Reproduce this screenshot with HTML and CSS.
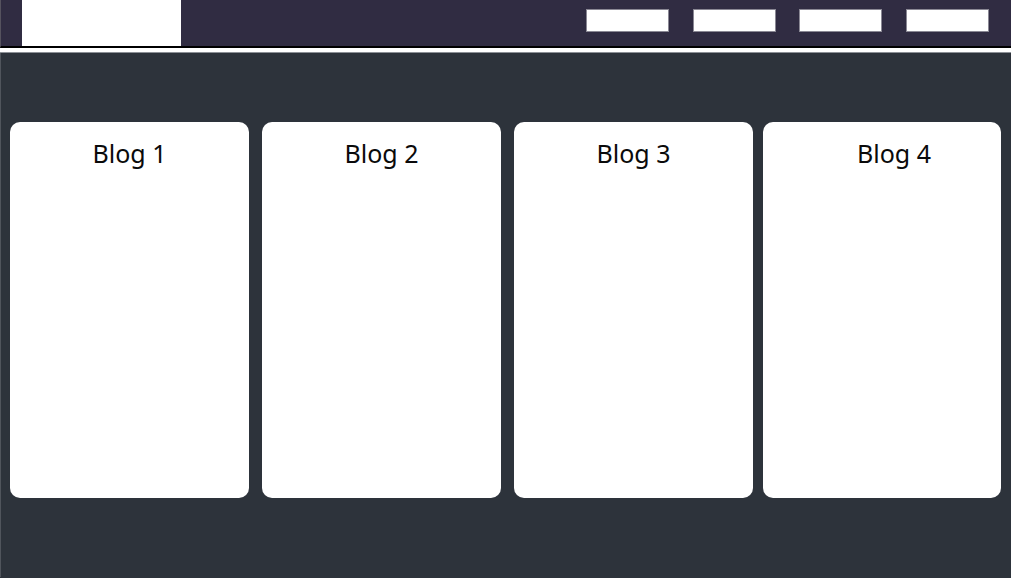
FILE: index.html
```html
<!DOCTYPE html>
<html lang="en">
<head>
<meta charset="utf-8">
<title>Blog</title>
<link rel="stylesheet" href="styles.css">
</head>
<body>
<header class="topbar">
  <div class="logo"></div>
  <nav class="nav">
    <span class="nav-item"></span>
    <span class="nav-item"></span>
    <span class="nav-item"></span>
    <span class="nav-item"></span>
  </nav>
</header>
<div class="divider"></div>
<main class="content">
  <section class="cards">
    <article class="card"><h2 class="card-title">Blog 1</h2></article>
    <article class="card"><h2 class="card-title">Blog 2</h2></article>
    <article class="card"><h2 class="card-title">Blog 3</h2></article>
    <article class="card card-last"><h2 class="card-title card-title-shift">Blog 4</h2></article>
  </section>
</main>
</body>
</html>
```

FILE: styles.css
```css
html, body {
  margin: 0;
  padding: 0;
  height: 100%;
}
body {
  background: #2d333b;
  font-family: "Noto Sans", "Open Sans", sans-serif;
  overflow: hidden;
}
.topbar {
  height: 46px;
  background: #302c42;
  border-left: 1px solid #55525e;
  border-bottom: 2px solid #000;
  display: flex;
  justify-content: space-between;
  align-items: flex-start;
  box-sizing: content-box;
}
.logo {
  width: 159px;
  height: 46px;
  margin-left: 21px;
  background: #fff;
}
.nav {
  display: flex;
  gap: 23.7px;
  margin-top: 9px;
  margin-right: 22px;
}
.nav-item {
  display: block;
  width: 81px;
  height: 21px;
  background: #fff;
  border: 1px solid #8a8894;
}
.divider {
  height: 4px;
  background: #fff;
  border-bottom: 1px solid #8c9096;
}
.content {
  border-left: 1px solid #50555c;
  height: 524px;
  padding-top: 69px;
  box-sizing: border-box;
}
.cards {
  display: flex;
  gap: 13px;
  padding-left: 9px;
}
.card {
  width: 239px;
  height: 376px;
  background: #fff;
  border-radius: 10px;
  box-sizing: border-box;
  padding-top: 15px;
}
.card-last {
  margin-left: -3px;
  width: 238px;
}
.card-title {
  margin: 0;
  text-align: center;
  font-weight: 400;
  font-size: 25px;
  line-height: 32px;
  color: #0a0a0a;
}
.card-title-shift {
  padding-left: 24px;
}
```
